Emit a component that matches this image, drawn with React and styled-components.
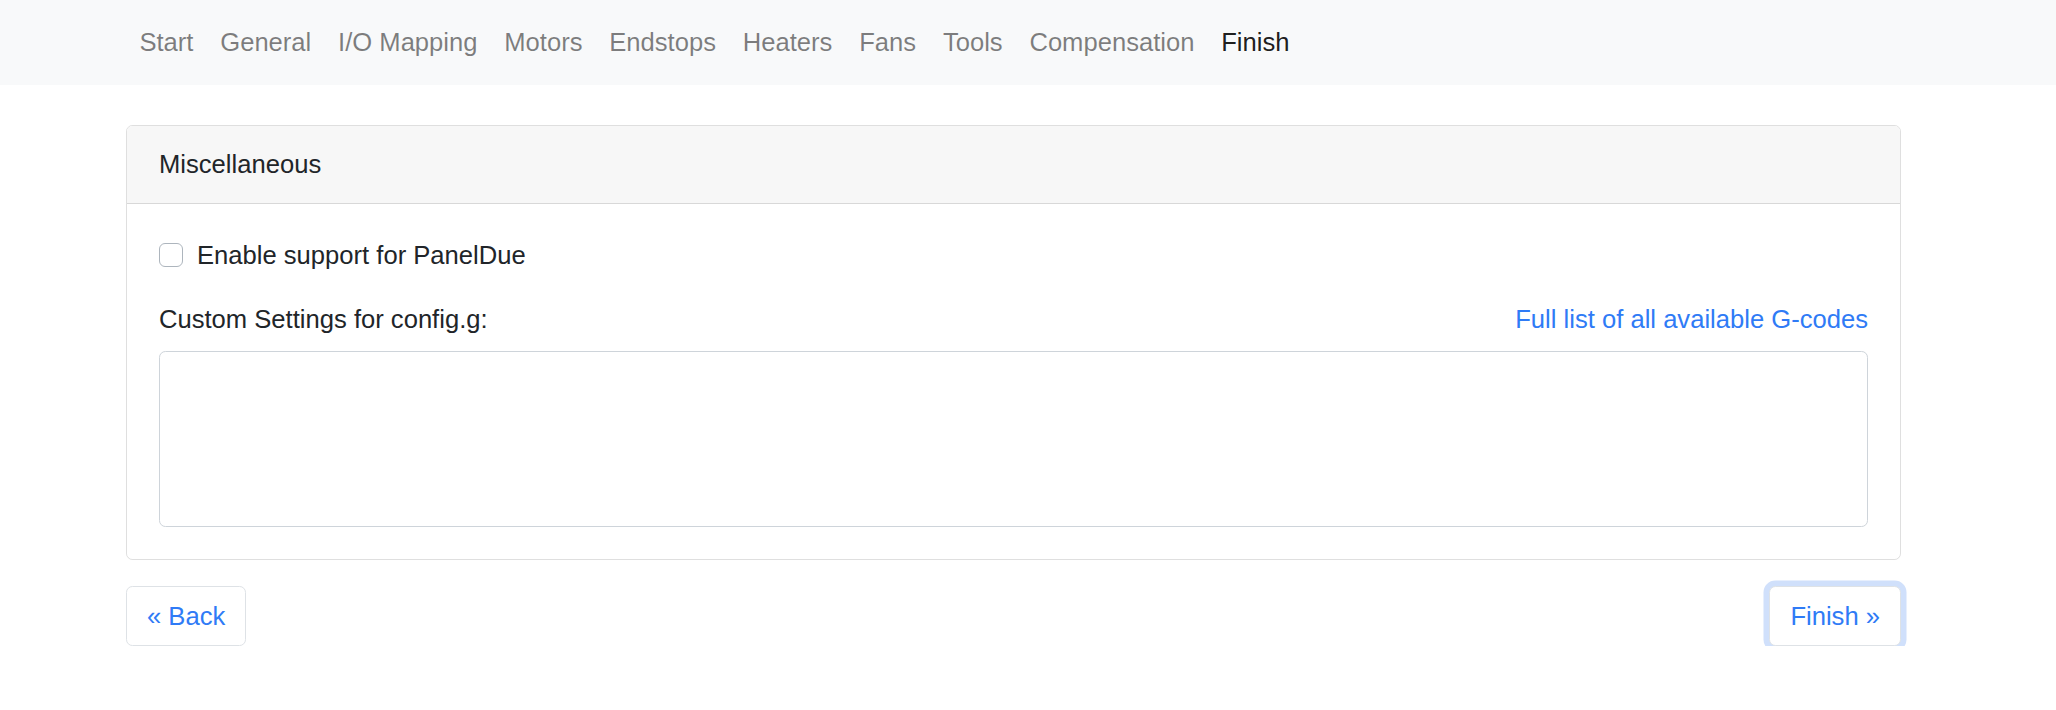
import React from "react";
import styled, { createGlobalStyle } from "styled-components";

const GlobalStyle = createGlobalStyle`
  body {
    margin: 0;
    background: #fff;
    font-family: "Liberation Sans", Arial, sans-serif;
    font-size: 25.6px;
    line-height: 1.5;
    color: #212529;
  }
  * {
    box-sizing: border-box;
  }
`;

const Navbar = styled.nav`
  height: 85px;
  background: #f8f9fa;
  display: flex;
  align-items: center;
  padding: 0 126px;
`;

const NavList = styled.ul`
  display: flex;
  list-style: none;
  margin: 0;
  padding: 0;
`;

const NavLink = styled.a`
  display: block;
  padding: 0 13.4px;
  color: ${(p) => (p.$active ? "rgba(0, 0, 0, 0.9)" : "rgba(0, 0, 0, 0.5)")};
  text-decoration: none;
  cursor: pointer;
`;

const Main = styled.main`
  padding: 40px 155px 0 126px;
`;

const Card = styled.div`
  border: 1px solid rgba(0, 0, 0, 0.125);
  border-radius: 6.4px;
  overflow: hidden;
`;

const CardHeader = styled.div`
  background: #f7f7f7;
  border-bottom: 1px solid rgba(0, 0, 0, 0.125);
  padding: 19.2px 32px;
`;

const CardBody = styled.div`
  padding: 32px;
`;

const CheckRow = styled.label`
  display: flex;
  align-items: center;
  gap: 14px;
  margin-bottom: 25.6px;
  cursor: pointer;
`;

const CheckBox = styled.span`
  width: 24px;
  height: 24px;
  border: 1px solid #adb5bd;
  border-radius: 6px;
  background: #fff;
`;

const LabelRow = styled.div`
  display: flex;
  justify-content: space-between;
  margin-bottom: 12.8px;
`;

const Link = styled.a`
  color: #2f7bf6;
  text-decoration: none;
  cursor: pointer;
`;

const TextArea = styled.textarea`
  display: block;
  width: 100%;
  height: 176px;
  border: 1px solid #ced4da;
  border-radius: 6.4px;
  resize: none;
  font: inherit;
  padding: 9.6px 19.2px;
  margin: 0;
  outline: none;
`;

const ButtonRow = styled.div`
  display: flex;
  justify-content: space-between;
  margin-top: 26px;
`;

const Button = styled.button`
  font: inherit;
  color: #2f7bf6;
  background: #fff;
  border: 1px solid #dee2e6;
  border-radius: 6.4px;
  padding: 9.6px 20px;
  cursor: pointer;
  box-shadow: ${(p) => (p.$focused ? "0 0 0 5.5px #d0e0fb" : "none")};
`;

const steps = [
  "Start",
  "General",
  "I/O Mapping",
  "Motors",
  "Endstops",
  "Heaters",
  "Fans",
  "Tools",
  "Compensation",
  "Finish",
];

const App = () => {
  return (
    <>
      <GlobalStyle />
      <Navbar>
        <NavList>
          {steps.map((s) => (
            <li key={s}>
              <NavLink $active={s === "Finish"}>{s}</NavLink>
            </li>
          ))}
        </NavList>
      </Navbar>
      <Main>
        <Card>
          <CardHeader>Miscellaneous</CardHeader>
          <CardBody>
            <CheckRow>
              <CheckBox />
              Enable support for PanelDue
            </CheckRow>
            <LabelRow>
              <span>Custom Settings for config.g:</span>
              <Link>Full list of all available G-codes</Link>
            </LabelRow>
            <TextArea />
          </CardBody>
        </Card>
        <ButtonRow>
          <Button>« Back</Button>
          <Button $focused>Finish »</Button>
        </ButtonRow>
      </Main>
    </>
  );
};

export default App;
